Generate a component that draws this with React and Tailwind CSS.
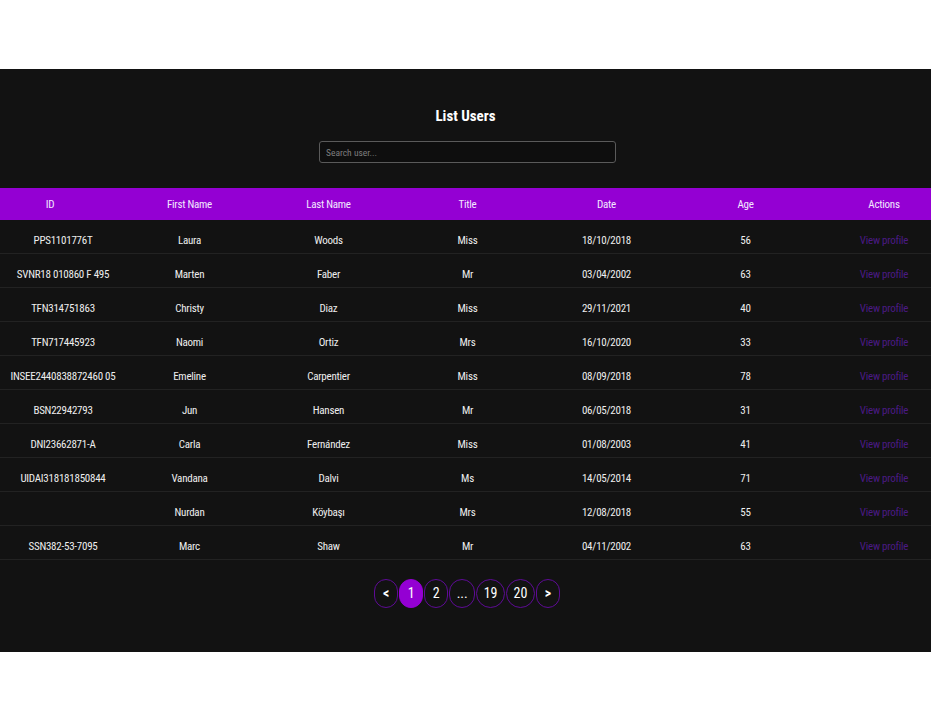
import React from "react";

const users = [
  { id: "PPS1101776T", first: "Laura", last: "Woods", title: "Miss", date: "18/10/2018", age: 56 },
  { id: "SVNR18 010860 F 495", first: "Marten", last: "Faber", title: "Mr", date: "03/04/2002", age: 63 },
  { id: "TFN314751863", first: "Christy", last: "Diaz", title: "Miss", date: "29/11/2021", age: 40 },
  { id: "TFN717445923", first: "Naomi", last: "Ortiz", title: "Mrs", date: "16/10/2020", age: 33 },
  { id: "INSEE2440838872460 05", first: "Emeline", last: "Carpentier", title: "Miss", date: "08/09/2018", age: 78 },
  { id: "BSN22942793", first: "Jun", last: "Hansen", title: "Mr", date: "06/05/2018", age: 31 },
  { id: "DNI23662871-A", first: "Carla", last: "Fernández", title: "Miss", date: "01/08/2003", age: 41 },
  { id: "UIDAI318181850844", first: "Vandana", last: "Dalvi", title: "Ms", date: "14/05/2014", age: 71 },
  { id: "", first: "Nurdan", last: "Köybaşı", title: "Mrs", date: "12/08/2018", age: 55 },
  { id: "SSN382-53-7095", first: "Marc", last: "Shaw", title: "Mr", date: "04/11/2002", age: 63 },
];

const pages = ["<", "1", "2", "...", "19", "20", ">"];

const App = () => {
  return (
    <div
      className="min-h-[721px] bg-white pt-[69px]"
      style={{ fontFamily: '"Roboto Condensed", "Liberation Sans Narrow", Roboto, sans-serif' }}
    >
      <div className="bg-[#121212] h-[583px] overflow-hidden">
        <h1 className="text-center text-white font-bold text-[15px] leading-[20px] pt-[37px]">
          List Users
        </h1>
        <div className="flex justify-center mt-[15px] pl-[4px]">
          <input
            type="text"
            placeholder="Search user..."
            className="w-[297px] h-[22px] rounded-[3px] border border-[#5a5a5a] bg-[#0e0e0e] px-[6px] text-[9.5px] text-gray-300 placeholder:text-[#7e7e7e] outline-none"
          />
        </div>

        <div className="mt-[25px] w-full">
          <div className="flex h-[32px] items-center pt-[2px] bg-[#9400d3] text-[11px] tracking-[-0.25px] text-[#f3e8ff]">
            <div className="w-[120px] shrink-0 text-center pr-[20px]">ID</div>
            <div className="w-[139px] shrink-0 text-center">First Name</div>
            <div className="w-[139px] shrink-0 text-center">Last Name</div>
            <div className="w-[139px] shrink-0 text-center">Title</div>
            <div className="w-[139px] shrink-0 text-center">Date</div>
            <div className="w-[139px] shrink-0 text-center">Age</div>
            <div className="w-[116px] shrink-0 text-center pl-[22px]">Actions</div>
          </div>
          {users.map((u, i) => (
            <div
              key={i}
              className="flex h-[34px] items-center pt-[9px] border-b border-[#222222] text-[11px] tracking-[-0.25px] text-[#eeeeee]"
            >
              <div className="w-[120px] shrink-0 text-center whitespace-nowrap pl-[6px]">{u.id}</div>
              <div className="w-[139px] shrink-0 text-center">{u.first}</div>
              <div className="w-[139px] shrink-0 text-center">{u.last}</div>
              <div className="w-[139px] shrink-0 text-center">{u.title}</div>
              <div className="w-[139px] shrink-0 text-center">{u.date}</div>
              <div className="w-[139px] shrink-0 text-center">{u.age}</div>
              <div className="w-[116px] shrink-0 text-center pl-[22px]">
                <a href="#" className="text-[#4b1a85]">View profile</a>
              </div>
            </div>
          ))}
        </div>

        <div className="flex justify-center gap-[1px] mt-[19px] pl-[3px]">
          {pages.map((p, i) => (
            <button
              key={i}
              className={`h-[29px] min-w-[24px] px-[6.5px] rounded-full border text-[14px] ${
                p === "1"
                  ? "bg-[#9400d3] border-[#9400d3] text-white"
                  : "border-[#5e0b96] text-white bg-transparent"
              } ${p === "<" || p === ">" ? "font-bold text-[12px]" : ""}`}
            >
              {p}
            </button>
          ))}
        </div>
      </div>
    </div>
  );
};

export default App;
